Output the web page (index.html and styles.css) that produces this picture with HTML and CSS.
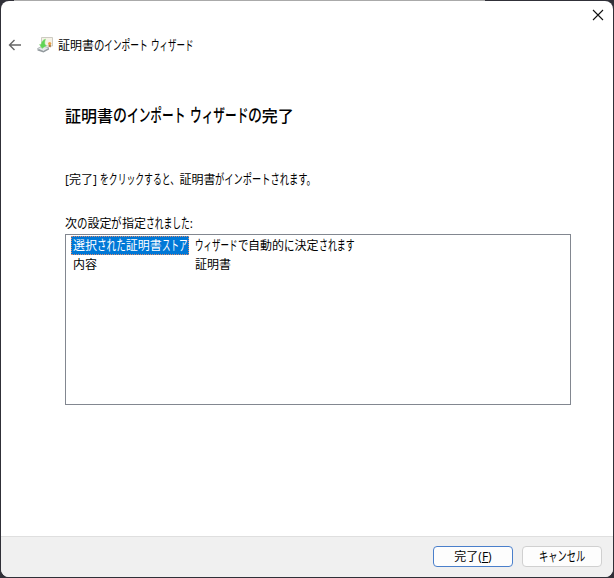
FILE: index.html
```
<!DOCTYPE html>
<html lang="ja">
<head>
<meta charset="utf-8">
<title>証明書のインポート ウィザード</title>
<link rel="stylesheet" href="styles.css">
</head>
<body>
<div class="edge"></div>
<main class="window">
  <header class="titlebar">
    <svg class="close" width="12" height="12" viewBox="0 0 12 12"><path d="M1 1l10 10M11 1L1 11"/></svg>
  </header>
  <div class="nav">
    <svg class="back" width="14" height="12" viewBox="0 0 14 12"><path d="M13 6H1.5M6.5 1l-5 5 5 5"/></svg>
    <svg class="cert" width="16" height="16" viewBox="0 0 16 16">
      <path d="M4.500.5h11v8.500h-11z" fill="#f6f2e6" stroke="#cdcbc2"/>
      <path d="M.5 11.500L6 9l6 2-5.500 3.500z" fill="#e4e8ea" stroke="#b5babd"/>
      <path d="M.5 12v1.500l6 2 5.500-3v-1.500l-5.500 3z" fill="#92999d"/>
      <path d="M8.500 2C5.500 3 4.500 5 4 7.500H2.500L5 11.500 9.500 8.500 8 7.500C7.500 5.500 8 4 8.500 2z" fill="#5fd455" stroke="#8bdc81" stroke-width=".5"/>
      <path d="M11.700 7.500v3l1-.8 1.100.8v-3z" fill="#a8743f"/>
      <circle cx="12.700" cy="6.500" r="1.600" fill="#e8a045"/>
    </svg>
    <span class="caption">証明書<span class="k n1">の</span><span class="k n5">インポート</span> <span class="k n5 tight">ウィザード</span></span>
  </div>
  <section class="content">
    <h1>証明書<span class="k n1">の</span><span class="k n5">インポート</span> <span class="k n5">ウィザード</span><span class="k n1">の</span>完了</h1>
    <p class="hint">[完了] <span class="k n9">をクリックすると、</span>証明書<span class="k n11">がインポートされます。</span></p>
    <p class="label">次<span class="k n1">の</span>設定<span class="k n1">が</span>指定<span class="k n5">されました</span>:</p>
    <div class="list">
      <div class="row"><span class="cell selected">選択<span class="k n3">された</span>証明書<span class="k n3 tight">ストア</span></span><span><span class="k n5 tight">ウィザード</span><span class="k n1">で</span>自動的<span class="k n1">に</span>決定<span class="k n4">されます</span></span></div>
      <div class="row"><span class="cell">内容</span><span>証明書</span></div>
    </div>
  </section>
  <footer>
    <button class="primary">完了(<u>F</u>)</button>
    <button><span class="k n5 wide">キャンセル</span></button>
  </footer>
</main>
</body>
</html>
```
FILE: styles.css
```
* { box-sizing: border-box; }
body { margin: 0; width: 614px; height: 578px; padding: 1px; background: #303038; overflow: hidden; font: 12px/18px "Open Sans", "Noto Sans CJK JP", sans-serif; color: #000; }
.window { width: 612px; height: 576px; background: #fff; border-radius: 8px; overflow: hidden; display: flex; flex-direction: column; }
.edge { position: absolute; top: 0; left: 14px; width: 471px; height: 1px; background: #aaa; }
svg { fill: none; }
.titlebar { height: 34px; display: flex; justify-content: flex-end; padding: 8px 9px; }
.close { stroke: #111; stroke-width: 1.1; }
.nav { height: 20px; display: flex; align-items: center; padding-left: 7px; }
.back { stroke: #666; stroke-width: 1.4; margin-right: 15px; }
.cert { margin-right: 5px; }
.caption { padding-top: 2px; white-space: nowrap; }
/* Condensed kana: each run is n em wide, scaled to s of its width */
.k { display: inline-block; width: calc(var(--n) * 1em); margin-right: calc(var(--n) * (var(--s) - 1) * 1em); transform: scale(var(--s), 1.12); transform-origin: 0 60%; white-space: nowrap; text-align: left; text-spacing-trim: space-all; }
.n1 { --n: 1; --s: .87; }
.n3 { --n: 3; --s: .8; }
.n4 { --n: 4; --s: .74; }
.n5 { --n: 5; --s: .73; }
.n9 { --n: 9; --s: .735; }
.n11 { --n: 11; --s: .77; }
.tight { --s: .71; }
.wide { --s: .77; }
.content { padding: 0 42px 0 64px; flex: 1; }
h1 { margin: 49px 0 0; font-size: 16px; line-height: 24px; font-weight: 500; }
p { margin: 0; white-space: nowrap; }
.hint { margin-top: 43px; }
.label { margin-top: 26px; }
.list { border: 1px solid #828790; width: 506px; height: 171px; margin-top: 1px; padding: 1px 5px; }
.row { display: flex; height: 19px; gap: 6px; white-space: nowrap; line-height: 20px; }
.cell { width: 118px; height: 19px; padding-left: 2px; }
.selected { background: #0078d7; color: #fff; outline: 1px dotted #d98a70; outline-offset: -1px; }
footer { height: 41px; background: #f0f0f0; border-top: 1px solid #dfdfdf; display: flex; justify-content: flex-end; gap: 9px; padding: 9px 11px; }
button { width: 80px; height: 21px; border: 1px solid #d0d0d0; border-radius: 4px; background: #fdfdfd; color: #000; font: inherit; padding: 0; line-height: 18px; }
.primary { border-color: #4a7fcb; }
```
